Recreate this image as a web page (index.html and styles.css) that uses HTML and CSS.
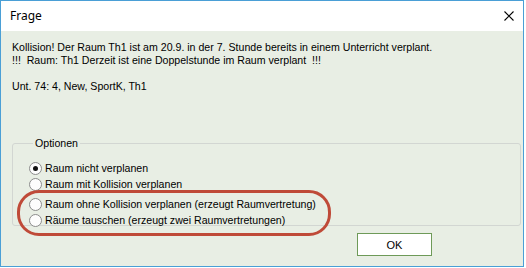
FILE: index.html
```html
<!DOCTYPE html>
<html lang="de">
<head>
    <meta charset="UTF-8">
    <title>Frage</title>
    <link rel="stylesheet" href="styles.css">
</head>
<body>
    <div class="window">
        <div class="titlebar">
            <span class="title">Frage</span>
            <svg class="close" width="10" height="10" viewBox="0 0 10 10">
                <path d="M0.5 0.5 L9.5 9.5 M9.5 0.5 L0.5 9.5" stroke="#000" stroke-width="1.1" fill="none"/>
            </svg>
        </div>
        <div class="content">
            <div class="message">
                <p>Kollision! Der Raum Th1 ist am 20.9. in der 7. Stunde bereits in einem Unterricht verplant.</p>
                <p>!!!&nbsp; Raum: Th1 Derzeit ist eine Doppelstunde im Raum verplant&nbsp; !!!</p>
                <p>&nbsp;</p>
                <p>Unt. 74: 4, New, SportK, Th1</p>
            </div>

            <fieldset class="options">
                <legend>Optionen</legend>
                <label class="option"><span class="radio checked"></span>Raum nicht verplanen</label>
                <label class="option"><span class="radio"></span>Raum mit Kollision verplanen</label>
                <label class="option gap"><span class="radio"></span>Raum ohne Kollision verplanen (erzeugt Raumvertretung)</label>
                <label class="option"><span class="radio"></span>Räume tauschen (erzeugt zwei Raumvertretungen)</label>
            </fieldset>

            <div class="buttons">
                <button class="ok">OK</button>
            </div>

            <!-- rote Markierung -->
            <div class="highlight"></div>
        </div>
    </div>
</body>
</html>
```

FILE: styles.css
```css
body {
    margin: 0;
    background: #fff;
    font-family: "Liberation Sans", Arial, sans-serif;
}
.window {
    width: 522px;
    height: 265px;
    border: 1px solid #4a9fd6;
    background: #e8eee4;
    position: relative;
}
.titlebar {
    height: 30px;
    background: #fff;
    display: flex;
    align-items: center;
    justify-content: space-between;
    padding: 0 9px 0 9px;
}
.title {
    font-family: "Noto Sans", sans-serif;
    font-size: 12px;
    color: #000;
    margin-top: -1px;
}
.close {
    display: block;
    margin-top: -1px;
}
.content {
    padding: 10px 0 0 11px;
}
.message {
    font-size: 10.6px;
    line-height: 13px;
    color: #000;
}
.message p {
    margin: 0;
}
.options {
    margin: 44px 2px 0 0;
    padding: 10px 0 0 16px;
    height: 77px;
    border: 1px solid #d2d6d2;
    border-radius: 3px;
    font-size: 10.6px;
}
.options legend {
    padding: 0 2px;
    margin-left: 4px;
    line-height: 13px;
    color: #000;
}
.option {
    display: flex;
    align-items: center;
    height: 16px;
    color: #000;
}
.option.gap {
    margin-top: 4px;
}
.radio {
    width: 11px;
    height: 11px;
    border: 1px solid #8c8c8c;
    border-radius: 50%;
    background: #fdfdfd;
    margin-right: 3px;
    position: relative;
    flex-shrink: 0;
}
.radio.checked::after {
    content: "";
    position: absolute;
    left: 3px;
    top: 3px;
    width: 5px;
    height: 5px;
    border-radius: 50%;
    background: #111;
}
.buttons {
    padding: 7px 0 0 345px;
}
.ok {
    width: 75px;
    height: 23px;
    border: 1px solid #6e9a58;
    background: #fff;
    font-family: "Liberation Sans", Arial, sans-serif;
    font-size: 11px;
    color: #000;
    padding: 0;
}
.highlight {
    position: absolute;
    left: 16px;
    top: 189px;
    width: 308px;
    height: 40px;
    border: 3px solid #bf4a38;
    border-radius: 22px;
}
```
